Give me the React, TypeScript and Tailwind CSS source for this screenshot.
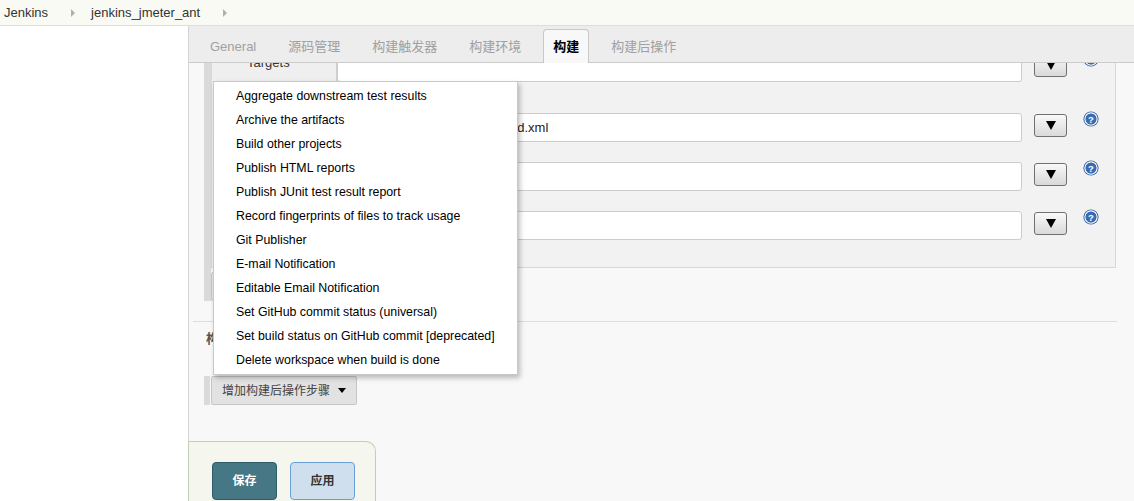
const menuItems = [
  "Aggregate downstream test results",
  "Archive the artifacts",
  "Build other projects",
  "Publish HTML reports",
  "Publish JUnit test result report",
  "Record fingerprints of files to track usage",
  "Git Publisher",
  "E-mail Notification",
  "Editable Email Notification",
  "Set GitHub commit status (universal)",
  "Set build status on GitHub commit [deprecated]",
  "Delete workspace when build is done",
];

const tabs = ["General", "源码管理", "构建触发器", "构建环境", "构建", "构建后操作"];

const Crumb = ({ label }: { label: string }) => (
  <div className="flex items-center">
    <span>{label}</span>
    <span className="ml-[23px] mr-[16px] w-0 h-0 border-l-[4px] border-y-[4px] border-y-transparent border-l-[#b0b0b0]" />
  </div>
);

const HelpIcon = () => (
  <svg width="16" height="16" viewBox="0 0 16 16" className="shrink-0">
    <circle cx="8" cy="8" r="7.6" fill="#2f5d9f" />
    <circle cx="8" cy="8" r="6.1" fill="none" stroke="#ffffff" strokeWidth="1.2" />
    <circle cx="8" cy="8" r="5.2" fill="#3a6cb6" />
    <text x="8" y="11.6" textAnchor="middle" fontSize="9.5" fontWeight="bold" fill="#ffffff" fontFamily="Liberation Sans, sans-serif">
      ?
    </text>
  </svg>
);

const DropButton = () => (
  <div className="ml-[12px] mt-[1px] w-[33px] h-[23px] shrink-0 rounded-[3px] border border-[#707070] bg-gradient-to-b from-[#f9f9f9] to-[#d9d9d9] flex items-center justify-center">
    <span className="w-0 h-0 border-t-[9px] border-x-[5px] border-x-transparent border-t-black" />
  </div>
);

const FieldRow = ({ label, value, className }: { label: string; value?: string; className?: string }) => (
  <div className={"flex items-start pr-[16px] " + (className ?? "")}>
    <div className="w-[125px] h-[29px] shrink-0 bg-[#efefef] border-r border-[#cfcfcf] pl-[35px] pt-[2px] leading-[16px] text-[13px] text-[#333]">
      {label}
    </div>
    <div className="flex-1 h-[29px] bg-white border border-[#cccccc] rounded-[3px] px-[8px] leading-[27px] text-[13px] text-[#222] whitespace-nowrap overflow-hidden">
      {value}
    </div>
    <DropButton />
    <div className="ml-[16px] -mt-[2px]">
      <HelpIcon />
    </div>
  </div>
);

export default function App() {
  return (
    <div className="relative w-[1134px] h-[501px] overflow-hidden bg-white font-['Liberation_Sans','Noto_Sans_CJK_SC',sans-serif]">
      {/* breadcrumb */}
      <div className="h-[26px] border-b border-[#dedede] bg-[#f9faf4] flex items-center pl-[4px] text-[13px] text-[#333]">
        <Crumb label="Jenkins" />
        <Crumb label="jenkins_jmeter_ant" />
      </div>

      <div className="flex h-[475px]">
        <div className="w-[188px] shrink-0 bg-white" />

        <div className="flex-1 flex flex-col border-l border-[#d4d4d4] bg-[#f8f8f8]">
          {/* tabs */}
          <div className="h-[37px] shrink-0 bg-[#ededed] border-b border-[#cccccc] flex items-end pl-[5px]">
            {tabs.map((t) => {
              const active = t === "构建";
              return (
                <div
                  key={t}
                  className={
                    active
                      ? "mx-[6px] px-[9px] h-[34px] -mb-px border border-b-0 border-[#c8c8c8] rounded-t-[4px] bg-[#f8f8f8] leading-[33px] text-[13px] font-bold text-black"
                      : "mx-[6px] px-[9px] h-[34px] -mb-px border border-b-0 border-transparent leading-[33px] text-[13px] text-[#a0a0a0]"
                  }
                >
                  {t}
                </div>
              );
            })}
          </div>

          {/* scrolled content */}
          <div className="h-[378px] shrink-0 overflow-hidden">
            <div className="-mt-[10px] pl-[4px] pr-[17px] flex flex-col">
              <div className="ml-[11px] mr-[1px] border-l-[7px] border-[#dadada] flex flex-col">
                <div className="bg-[#f2f2f2] border-x border-b border-[#d8d8d8] pb-[27px]">
                  <FieldRow label="Targets" />
                  <FieldRow label="Build File" value="/var/lib/jenkins/jmeter_ant/build.xml" className="mt-[31px]" />
                  <FieldRow label="Properties" className="mt-[20px]" />
                  <FieldRow label="Java Options" className="mt-[20px]" />
                </div>
                <div className="mt-[4px] h-[29px] flex items-start">
                  <div className="h-[29px] px-[10px] border border-[#c8c8c8] rounded-[2px] bg-[#e4e4e4] flex items-center gap-[8px] text-[12px] text-[#444]">
                    增加构建步骤
                    <span className="w-0 h-0 border-t-[5px] border-x-[4px] border-x-transparent border-t-black" />
                  </div>
                </div>
              </div>

              <div className="mt-[20px] border-t border-[#dddddd]" />
              <div className="pl-[13px] pt-[9px] leading-[16px] text-[13px] font-bold text-[#555]">构建后操作</div>

              <div className="mt-[29px] ml-[11px] flex">
                <div className="border-l-[6px] border-[#dadada] pl-px">
                  <div className="h-[29px] pl-[10px] pr-[10px] border border-[#c6c6c6] rounded-[2px] bg-[#e2e2e2] flex items-center gap-[8px] text-[12px] text-[#444]">
                    增加构建后操作步骤
                    <span className="w-0 h-0 border-t-[5px] border-x-[4px] border-x-transparent border-t-black" />
                  </div>
                </div>
              </div>
            </div>
          </div>

          {/* bottom sticker */}
          <div className="h-[60px] shrink-0">
            <div className="-ml-px w-[188px] h-[60px] border-l border-t border-r border-[#bcd0bc] rounded-tr-[10px] bg-[#f5f7ef] pl-[23px] pt-[20px] flex gap-[13px]">
              <div className="w-[65px] h-[38px] rounded-[4px] border border-[#2d5b68] bg-[#457785] flex items-center justify-center text-[12px] font-bold text-white">
                保存
              </div>
              <div className="w-[65px] h-[38px] rounded-[4px] border border-[#6a9fd6] bg-[#cfdfee] flex items-center justify-center text-[12px] font-bold text-[#333]">
                应用
              </div>
            </div>
          </div>
        </div>
      </div>

      {/* dropdown menu */}
      <div className="absolute left-[213px] top-[81px] w-[305px] bg-white border border-[#c8c8c8] py-[2px] shadow-[2px_3px_5px_rgba(0,0,0,0.25)]">
        {menuItems.map((m) => (
          <div key={m} className="h-[24px] pl-[22px] leading-[24px] text-[12.35px] text-black whitespace-nowrap">
            {m}
          </div>
        ))}
      </div>
    </div>
  );
}
